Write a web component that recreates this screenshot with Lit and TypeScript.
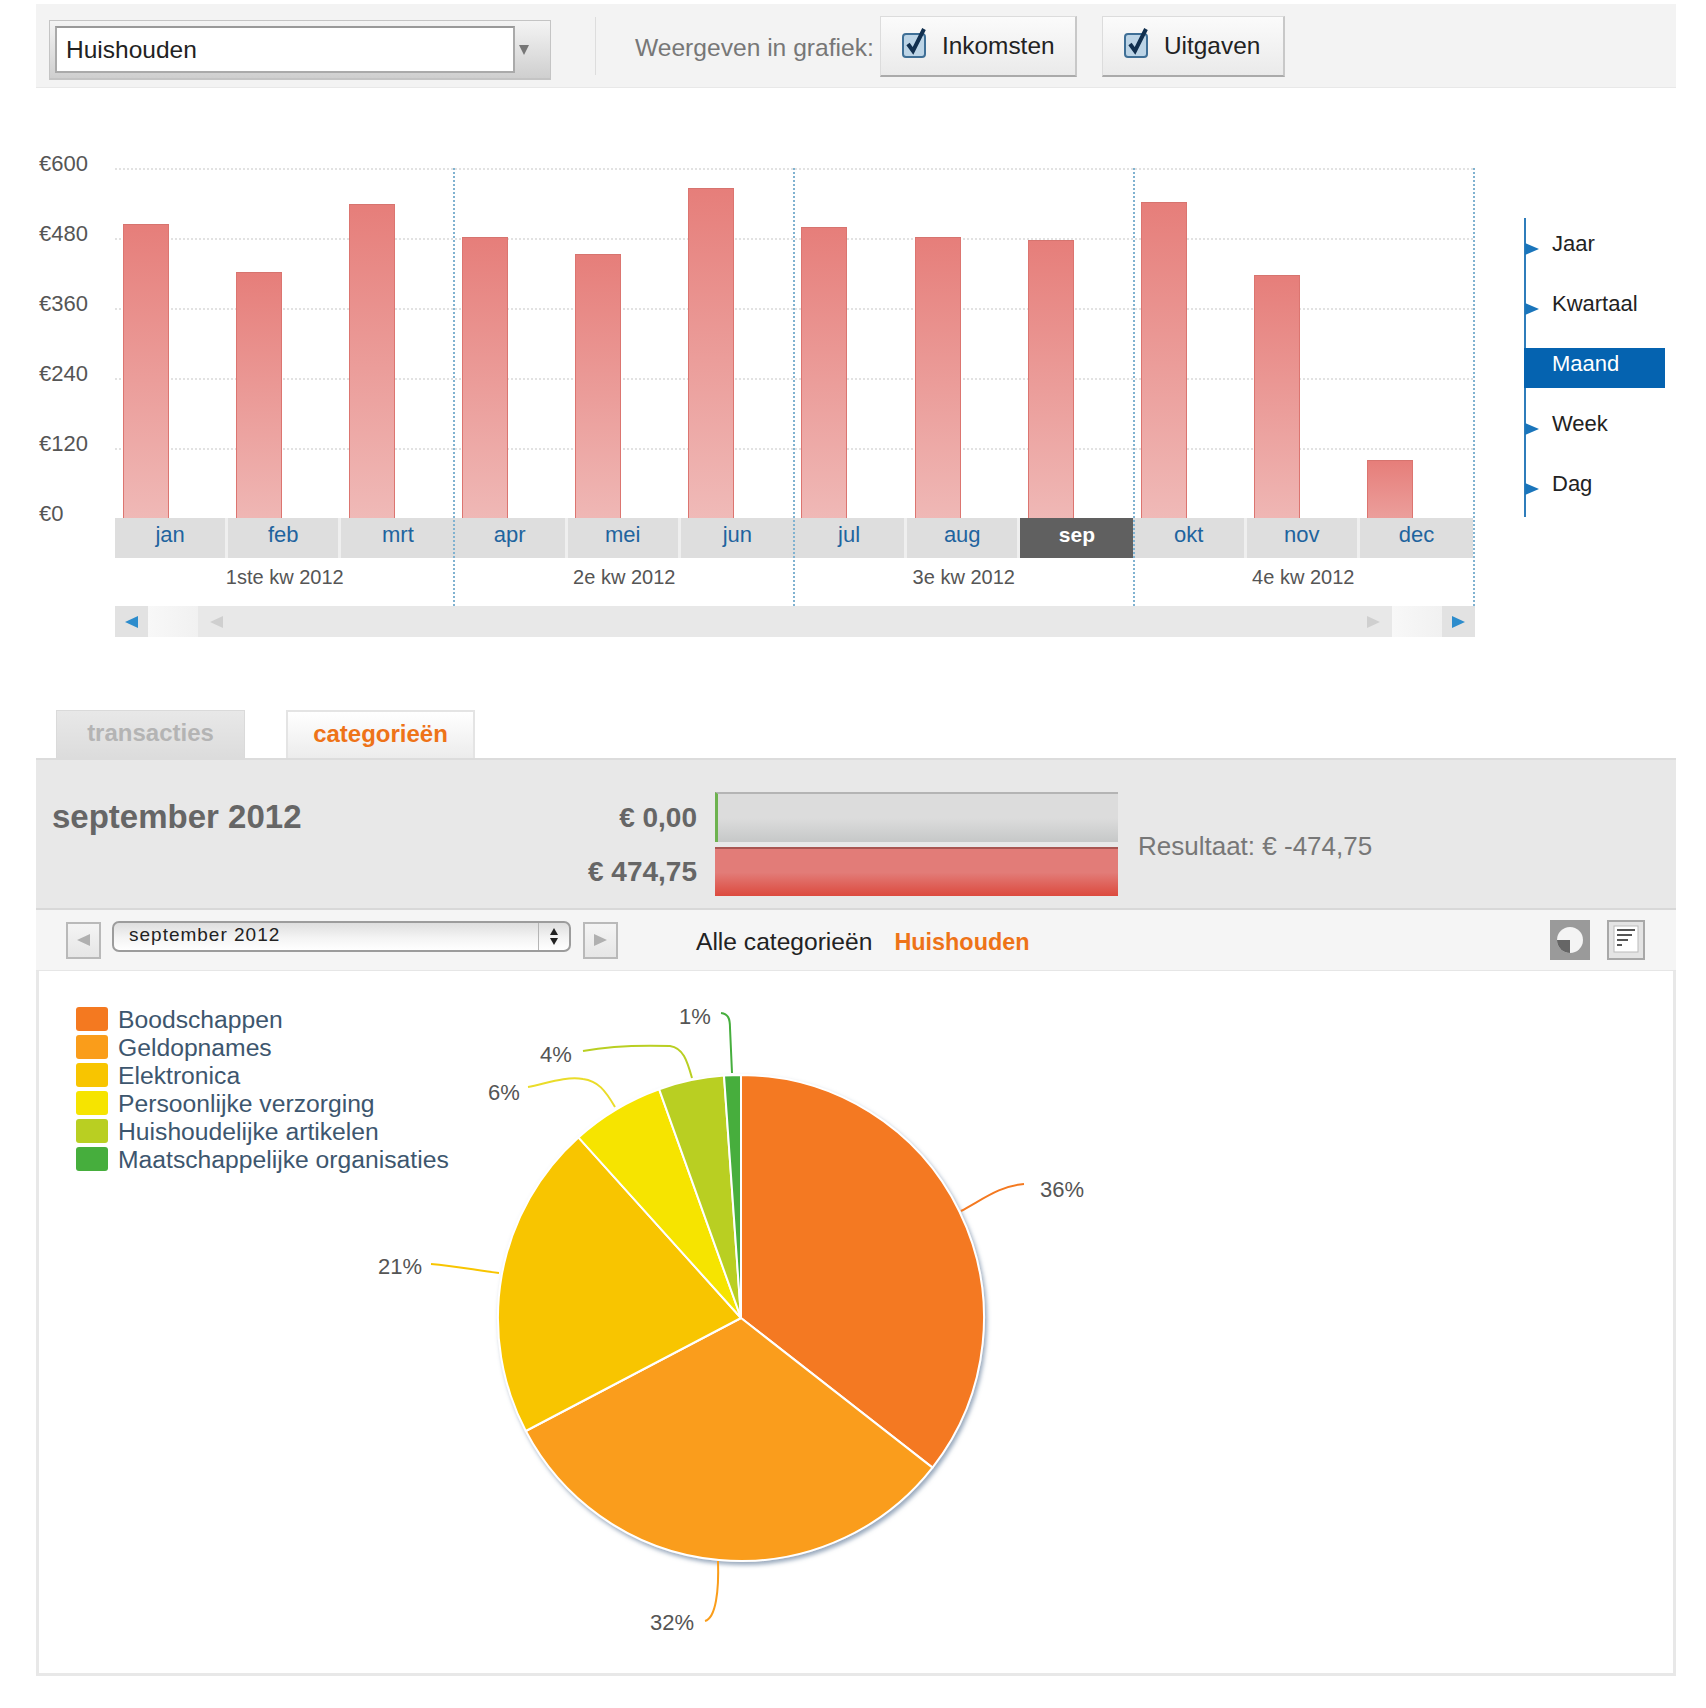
import { LitElement, html, css, svg } from "lit";
import { customElement } from "lit/decorators.js";

const BARS = [294, 246, 314, 281, 264, 330, 291, 281, 278, 316, 243.5, 58];
const MONTHS = ["jan", "feb", "mrt", "apr", "mei", "jun", "jul", "aug", "sep", "okt", "nov", "dec"];
const QUARTERS = ["1ste kw 2012", "2e kw 2012", "3e kw 2012", "4e kw 2012"];
const YLABELS = ["€600", "€480", "€360", "€240", "€120", "€0"];
const MENU = ["Jaar", "Kwartaal", "Maand", "Week", "Dag"];
const LEGEND: [string, string][] = [
  ["Boodschappen", "#f47920"],
  ["Geldopnames", "#fa9d1a"],
  ["Elektronica", "#f8c500"],
  ["Persoonlijke verzorging", "#f6e400"],
  ["Huishoudelijke artikelen", "#b9cf22"],
  ["Maatschappelijke organisaties", "#46ae3d"],
];
const CX = 741, CY = 1318, R = 243;
const ANGLES = [0, 128, 242.3, 318, 340.3, 356, 360];

function pt(a: number) {
  const r = (a * Math.PI) / 180;
  return `${(CX + R * Math.sin(r)).toFixed(1)} ${(CY - R * Math.cos(r)).toFixed(1)}`;
}

const check = html`<svg class="chk" viewBox="0 0 28 32" width="28" height="32">
  <rect x="2" y="7" width="22" height="23" rx="3" fill="#bcd4e6" stroke="#3f6f96" stroke-width="2"></rect>
  <path d="M7 17 L12 24 L23 2" fill="none" stroke="#12304f" stroke-width="4"></path>
</svg>`;

@customElement("app-root")
export class AppRoot extends LitElement {
  static styles = css`
    :host { display: block; width: 1706px; height: 1708px; background: #fff; font-family: "Liberation Sans", Arial, sans-serif; color: #333; }
    .page { width: 1640px; margin-left: 36px; padding-top: 4px; }
    .top { height: 84px; background: #f3f3f3; border-bottom: 1px solid #e8e8e8; box-sizing: border-box; display: flex; align-items: center; padding-left: 13px; }
    .combo { width: 502px; height: 60px; margin-top: 9px; box-sizing: border-box; border: 1px solid #c4c4c4; border-bottom-width: 2px; background: linear-gradient(#f4f4f4, #cfcfcf); display: flex; align-items: center; padding-left: 5px; color: #777; }
    .combo .inp { width: 460px; height: 47px; box-sizing: border-box; background: #fff; border: 2px solid #aaa; border-top-color: #999; font-size: 24.5px; color: #222; padding-left: 9px; line-height: 43px; }
    .combo .arr { width: 0; height: 0; border-left: 5px solid transparent; border-right: 5px solid transparent; border-top: 10px solid #777; margin-left: 4px; }
    .sep { width: 1px; height: 58px; background: #ddd; margin-left: 44px; }
    .lbl { font-size: 24.6px; color: #777; margin-left: 39px; margin-top: 4px; width: 245px; white-space: nowrap; }
    .btn { height: 61px; box-sizing: border-box; border: 1px solid #dcdcdc; border-bottom: 2px solid #aaa; border-right: 2px solid #c8c8c8; background: linear-gradient(#fbfbfb, #eaeaea); display: flex; align-items: center; font-size: 24.4px; color: #222; padding-left: 20px; gap: 13px; margin-top: 2px; }
    .btn.a { width: 197px; }
    .btn.b { width: 183px; margin-left: 25px; }
    .chk { margin-top: -6px; flex: none; }

    .chart { display: flex; margin-top: 80px; }
    .yaxis { width: 79px; margin-top: -39px; padding-left: 3px; box-sizing: border-box; font-size: 22px; color: #555; }
    .yaxis div { height: 70px; line-height: 70px; }
    .plotcol { width: 1360px; position: relative; }
    .bars { height: 350px; width: 1358px; display: grid; grid-template-columns: repeat(12, 1fr); align-items: end; position: relative; }
    .gl { position: absolute; left: 0; right: 0; border-top: 2px dotted #e2e2e2; }
    .cell { padding-left: 7.5px; position: relative; }
    .bar { width: 46px; box-sizing: border-box; border: 1.5px solid #dc7570; border-bottom: 0; border-top-color: #d6746f; background-image: linear-gradient(#e67e7a, #f0bcba); background-repeat: no-repeat; background-position: top; }
    .months { width: 1358px; height: 40px; display: grid; grid-template-columns: repeat(12, 1fr); }
    .m { background: #dedede; border-right: 3px solid #efefef; box-sizing: border-box; text-align: center; font-size: 22px; line-height: 34px; color: #1f649e; }
    .m.end { border-right: 0; }
    .m.sel { background: #606060; color: #fff; font-weight: 700; font-size: 21px; border-right: 0; }
    .quarters { width: 1358px; height: 48px; display: grid; grid-template-columns: repeat(4, 1fr); text-align: center; font-size: 20px; line-height: 38px; color: #555; }
    .div { position: absolute; top: 0; bottom: 31px; width: 0; border-left: 2px dotted #80b2d0; }
    .scroll { height: 31px; width: 1360px; background: #e8e8e8; display: flex; align-items: center; }
    .sb { width: 33px; height: 31px; background: #e2e2e2; display: flex; align-items: center; justify-content: center; flex: none; }
    .sl { width: 50px; height: 31px; background: linear-gradient(90deg, #f8f8f8, #f1f1f1); flex: none; }
    .smid { flex: 1; display: flex; justify-content: space-between; padding: 0 12px; }
    .tl, .tr { width: 0; height: 0; border-top: 6px solid transparent; border-bottom: 6px solid transparent; }
    .tl { border-right: 13px solid #2d8ccc; }
    .tr { border-left: 13px solid #2d8ccc; }
    .tl.g { border-right-color: #cfcfcf; }
    .tr.g { border-left-color: #cfcfcf; }
    .menu { margin-left: 49px; margin-top: 50px; width: 139px; border-left: 2px solid #2f7dbb; font-size: 22px; color: #222; padding-top: 10px; height: 289px; }
    .mi { height: 40px; margin-bottom: 20px; line-height: 32px; padding-left: 28px; position: relative; margin-left: -2px; }
    .mi::before { content: ""; position: absolute; left: 1px; top: 15px; border-left: 14px solid #1a75bb; border-top: 6px solid transparent; border-bottom: 6px solid transparent; }
    .mi.sel { background: #0563b0; color: #fff; }
    .mi.sel::before { display: none; }

    .tabs { display: flex; gap: 41px; margin-top: 73px; padding-left: 20px; height: 48px; }
    .tab { width: 189px; box-sizing: border-box; text-align: center; font-size: 24px; font-weight: 700; line-height: 44px; }
    .tab.off { background: linear-gradient(#e8e8e8, #dcdcdc); border: 1px solid #dadada; border-bottom: 0; color: #b4b4b4; }
    .tab.on { background: linear-gradient(#fff, #ececec); border: 2px solid #e4e4e4; border-bottom: 0; color: #ee7318; }
    .sum { height: 152px; box-sizing: border-box; background: #e8e8e8; border-top: 2px solid #dcdcdc; border-bottom: 2px solid #d8d8d8; display: grid; grid-template-columns: 280px 365px 403px auto; grid-template-rows: 50px 50px; row-gap: 4px; padding: 32px 0 0 16px; align-items: center; }
    .title { font-size: 33px; font-weight: 700; color: #666; }
    .amt { font-size: 28px; font-weight: 700; color: #666; text-align: right; grid-column: 2; margin-top: 2px; }
    .amt.two { grid-row: 2; }
    .gbar { height: 50px; box-sizing: border-box; grid-column: 3; grid-row: 1; width: 403px; margin-left: 18px; background: linear-gradient(#dcdcdc 50%, #c6c8c8); border-top: 2px solid #b4b4b4; border-left: 3px solid #6db24f; }
    .rbar { height: 49px; box-sizing: border-box; grid-column: 3; grid-row: 2; width: 403px; margin-left: 18px; background: linear-gradient(#e27c78 50%, #dc4a3e); border-top: 2px solid #a85652; }
    .res { grid-column: 4; grid-row: 1 / span 2; font-size: 26px; color: #777; margin: 4px 0 0 38px; white-space: nowrap; }

    .tool { height: 61px; box-sizing: border-box; background: #f5f5f5; border-bottom: 1px solid #e6e6e6; display: flex; align-items: center; padding: 0 31px 0 30px; }
    .pg { width: 35px; height: 37px; box-sizing: border-box; background: linear-gradient(#f4f4f4, #e6e6e6); border: 2px solid #b9b9b9; display: flex; align-items: center; justify-content: center; flex: none; }
    .pg.next { margin-left: 12px; }
    .pg .tl { border-right-color: #b0b0b0; }
    .pg .tr { border-left-color: #b0b0b0; }
    .sel2 { margin-left: 11px; margin-top: -7px; width: 459px; height: 31px; box-sizing: border-box; border: 2px solid #9c9c9c; border-radius: 7px; background: linear-gradient(#dedede, #f4f4f4 55%, #fff); display: flex; align-items: center; font-size: 19px; letter-spacing: 1px; color: #222; padding-left: 15px; }
    .sel2 .t { flex: 1; line-height: 24px; margin-top: -3px; }
    .sel2 .ud { width: 30px; height: 100%; border-left: 1px solid #b5b5b5; display: flex; flex-direction: column; align-items: center; justify-content: center; gap: 3px; }
    .up, .dn { width: 0; height: 0; border-left: 4px solid transparent; border-right: 4px solid transparent; }
    .up { border-bottom: 7px solid #222; }
    .dn { border-top: 7px solid #222; }
    .all { font-size: 24.6px; color: #222; margin: 4px 0 0 78px; white-space: nowrap; }
    .hh { font-size: 23.4px; font-weight: 700; color: #ee7318; margin: 4px 0 0 22px; }
    .ico { display: block; flex: none; }
    .ico.a { margin-left: auto; }
    .ico.b { margin-left: 17px; }

    .content { height: 705px; box-sizing: border-box; border: 3px solid #e8e8e8; border-top: 0; position: relative; padding: 35px 0 0 37px; }
    .legend { width: 360px; position: relative; z-index: 1; }
    .li { height: 28px; display: flex; align-items: center; gap: 10px; font-size: 24.7px; color: #3d566e; white-space: nowrap; line-height: 26px; }
    .sw { width: 32px; height: 24px; border-radius: 3px; flex: none; margin-top: -2px; }
    .pie { position: absolute; left: 0; top: 0; display: block; }
    .pie text { font-family: "Liberation Sans", Arial, sans-serif; font-size: 22px; fill: #555; }
  `;

  render() {
    return html`<div class="page">
      <div class="top">
        <div class="combo"><div class="inp">Huishouden</div><div class="arr"></div></div>
        <div class="sep"></div>
        <div class="lbl">Weergeven in grafiek:</div>
        <div class="btn a">${check}Inkomsten</div>
        <div class="btn b">${check}Uitgaven</div>
      </div>

      <div class="chart">
        <div class="yaxis">${YLABELS.map((l) => html`<div>${l}</div>`)}</div>
        <div class="plotcol">
          <div class="bars">
            ${[0, 70, 140, 210, 280].map((y) => html`<div class="gl" style="top:${y}px"></div>`)}
            ${BARS.map((h) => html`<div class="cell"><div class="bar" style="height:${h}px;background-size:100% ${60 + h * 0.85}px"></div></div>`)}
          </div>
          <div class="months">
            ${MONTHS.map((m, i) => html`<div class="m ${i % 3 === 2 ? "end" : ""} ${m === "sep" ? "sel" : ""}">${m}</div>`)}
          </div>
          <div class="quarters">${QUARTERS.map((q) => html`<div>${q}</div>`)}</div>
          <div class="scroll">
            <div class="sb"><div class="tl"></div></div>
            <div class="sl"></div>
            <div class="smid"><div class="tl g"></div><div class="tr g"></div></div>
            <div class="sl"></div>
            <div class="sb"><div class="tr"></div></div>
          </div>
          ${[338, 678, 1018, 1358].map((x) => html`<div class="div" style="left:${x}px"></div>`)}
        </div>
        <div class="menu">
          ${MENU.map((m) => html`<div class="mi ${m === "Maand" ? "sel" : ""}">${m}</div>`)}
        </div>
      </div>

      <div class="tabs">
        <div class="tab off">transacties</div>
        <div class="tab on">categorieën</div>
      </div>
      <div class="sum">
        <div class="title">september 2012</div>
        <div class="amt">€ 0,00</div>
        <div class="gbar"></div>
        <div class="amt two">€ 474,75</div>
        <div class="rbar"></div>
        <div class="res">Resultaat: € -474,75</div>
      </div>
      <div class="tool">
        <div class="pg"><div class="tl"></div></div>
        <div class="sel2"><span class="t">september 2012</span><span class="ud"><span class="up"></span><span class="dn"></span></span></div>
        <div class="pg next"><div class="tr"></div></div>
        <div class="all">Alle categorieën</div>
        <div class="hh">Huishouden</div>
        <svg class="ico a" width="40" height="40" viewBox="0 0 40 40">
          <rect width="40" height="40" fill="#9a9a9a"></rect>
          <circle cx="20" cy="20" r="13" fill="#f4f4f4"></circle>
          <path d="M20 20 H7 A13 13 0 0 0 20 33 Z" fill="#666"></path>
        </svg>
        <svg class="ico b" width="38" height="40" viewBox="0 0 38 40">
          <rect x="1" y="1" width="36" height="38" fill="#e4e4e4" stroke="#a8a8a8" stroke-width="2"></rect>
          <rect x="7" y="6" width="24" height="26" fill="#fff" stroke="#bbb"></rect>
          <path d="M10 10 H28 M10 15 H25 M10 20 H21 M10 25 H15" stroke="#555" stroke-width="2"></path>
        </svg>
      </div>
      <div class="content">
        <svg class="pie" width="1634" height="702" viewBox="39 971 1634 702">
          <defs>
            <filter id="sh" x="-10%" y="-10%" width="120%" height="120%">
              <feDropShadow dx="2" dy="3" stdDeviation="2" flood-color="#6d84a0" flood-opacity="0.7"></feDropShadow>
            </filter>
          </defs>
          <g filter="url(#sh)">
            ${LEGEND.map(([, c], i) => {
              const a0 = ANGLES[i], a1 = ANGLES[i + 1];
              const large = a1 - a0 > 180 ? 1 : 0;
              return svg`<path d="M${CX} ${CY} L${pt(a0)} A${R} ${R} 0 ${large} 1 ${pt(a1)} Z" fill="${c}" stroke="#fff" stroke-width="2" stroke-linejoin="round"></path>`;
            })}
          </g>
          <g fill="none" stroke-width="2">
            <path d="M961 1211 C985 1198 1000 1186 1024 1184" stroke="#f47920"></path>
            <path d="M718 1561 C719 1590 716 1618 705 1621" stroke="#fa9d1a"></path>
            <path d="M431 1264 C455 1266 475 1270 499 1273" stroke="#f8c500"></path>
            <path d="M528 1087 C545 1084 565 1076 583 1079 C598 1081 605 1090 615 1107" stroke="#eadc2a"></path>
            <path d="M583 1051 C610 1046 640 1045 670 1046 C683 1048 687 1060 692 1078" stroke="#b9cf22"></path>
            <path d="M721 1013 C728 1014 730 1018 730 1028 L732 1073" stroke="#46ae3d"></path>
          </g>
          <text x="1040" y="1197">36%</text>
          <text x="650" y="1630">32%</text>
          <text x="378" y="1274">21%</text>
          <text x="488" y="1100">6%</text>
          <text x="540" y="1062">4%</text>
          <text x="679" y="1024">1%</text>
        </svg>
        <div class="legend">
          ${LEGEND.map(([n, c]) => html`<div class="li"><span class="sw" style="background:${c}"></span><span>${n}</span></div>`)}
        </div>
      </div>
    </div>`;
  }
}
